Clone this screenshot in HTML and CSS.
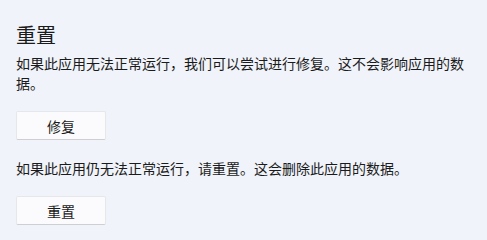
FILE: index.html
```html
<!DOCTYPE html>
<html lang="zh-CN">
<head>
<meta charset="utf-8">
<link rel="stylesheet" href="styles.css">
</head>
<body>
<main class="panel">
  <h2 class="title">重置</h2>
  <p class="desc">如果此应用无法正常运行，我们可以尝试进行修复。这不会影响应用的数据。</p>
  <button class="btn">修复</button>
  <p class="desc desc-second">如果此应用仍无法正常运行，请重置。这会删除此应用的数据。</p>
  <button class="btn">重置</button>
</main>
</body>
</html>
```
FILE: styles.css
```css
html, body {
  margin: 0;
  padding: 0;
  background: #f0f3f9;
}
.panel {
  padding: 21px 16px 0 16px;
  font-family: "Noto Sans CJK SC", "Noto Sans", sans-serif;
  color: #1b1b1b;
  display: flex;
  flex-direction: column;
  align-items: flex-start;
}
.title {
  margin: 0;
  font-size: 20px;
  line-height: 28px;
  font-weight: 400;
}
.desc {
  margin: 4px 0 0 0;
  font-size: 14px;
  line-height: 20px;
}
.desc-second {
  margin-top: 18px;
}
.btn {
  margin-top: 18px;
  width: 90px;
  height: 29px;
  padding: 0;
  background: #fbfbfd;
  border: 1px solid #e6e7ea;
  border-bottom-color: #cfcfd2;
  border-radius: 2px;
  font-family: "Noto Sans CJK SC", sans-serif;
  font-size: 14px;
  color: #1b1b1b;
  cursor: pointer;
}
```
